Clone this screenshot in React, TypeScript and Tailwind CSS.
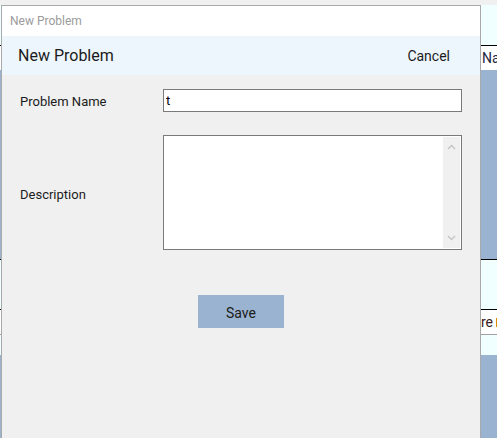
import { useState } from 'react';

function Chevron({ up }: { up?: boolean }) {
  return (
    <svg width="9" height="6" viewBox="0 0 9 6" className="text-[#c4c4c4]">
      <path
        d={up ? 'M1 5 L4.5 1.5 L8 5' : 'M1 1 L4.5 4.5 L8 1'}
        fill="none"
        stroke="currentColor"
        strokeWidth="1.4"
      />
    </svg>
  );
}

export default function App() {
  const [name, setName] = useState('t');
  const [desc, setDesc] = useState('');

  return (
    <div
      className="relative w-[497px] h-[438px] overflow-hidden bg-[#f0f0f0]"
      style={{ fontFamily: 'Roboto, "Liberation Sans", sans-serif' }}
    >
      {/* app behind the dialog */}
      <div className="flex flex-col w-full h-full">
        <div className="h-[5px] bg-[#f0f0f0]" />
        <div className="h-[40px] bg-[#f0ffff]" />
        <div className="h-px bg-black" />
        <div className="h-[24px] bg-white pl-[482px] text-[14px] leading-[24px] text-[#1c2740] whitespace-nowrap">
          Na
        </div>
        <div className="h-[189px] bg-[#9ab3d0]" />
        <div className="h-px bg-black" />
        <div className="h-[49px] bg-[#f0ffff]" />
        <div className="h-px bg-black" />
        <div className="h-[24px] bg-white pl-[481px] flex items-center text-[14px] text-[#3a1a1a] whitespace-nowrap">
          re
          <span className="inline-block w-[3px] h-[9px] ml-[3px] bg-[#e08a00]" />
        </div>
        <div className="h-px bg-[#a0a0a0]" />
        <div className="h-[20px] bg-[#f0ffff]" />
        <div className="flex-1 bg-[#9ab3d0]" />
      </div>

      {/* dialog window */}
      <div className="absolute left-[1px] top-[5px] w-[480px] h-[440px] border border-[#a9a9a9] bg-[#f0f0f0] flex flex-col">
        <div className="h-[30px] bg-white pl-[8px] flex items-center text-[12px] text-[#9b9b9b]">
          New Problem
        </div>
        <div className="h-[39px] bg-[#eef6fd] pl-[16px] pr-[30px] pt-px flex items-center justify-between">
          <span className="text-[16px] text-[#1b1b1b]">New Problem</span>
          <button className="text-[14px] text-[#1b1b1b] pt-px">Cancel</button>
        </div>

        <div className="flex flex-col pt-[14px] pl-[18px]">
          <div className="flex items-center">
            <label className="w-[143px] pt-[2px] text-[13px] text-[#1b1b1b]">Problem Name</label>
            <input
              value={name}
              onChange={(e) => setName(e.target.value)}
              className="w-[299px] h-[23px] border border-[#7a7a7a] bg-white px-[2px] text-[13px] text-black outline-none"
            />
          </div>

          <div className="flex items-center mt-[23px]">
            <label className="w-[143px] pt-[4px] text-[13px] text-[#1b1b1b]">Description</label>
            <div className="w-[299px] h-[115px] border border-[#7a7a7a] bg-white flex">
              <textarea
                value={desc}
                onChange={(e) => setDesc(e.target.value)}
                className="flex-1 resize-none outline-none px-[2px] text-[13px]"
              />
              <div className="w-[17px] my-px mr-px bg-[#f0f0f0] flex flex-col items-center justify-between py-[7px]">
                <Chevron up />
                <Chevron />
              </div>
            </div>
          </div>

          <div className="mt-[45px] ml-[178px]">
            <button className="w-[86px] h-[33px] pt-[3px] bg-[#9ab3d0] text-[14px] text-[#1b1b1b]">Save</button>
          </div>
        </div>
      </div>
    </div>
  );
}
